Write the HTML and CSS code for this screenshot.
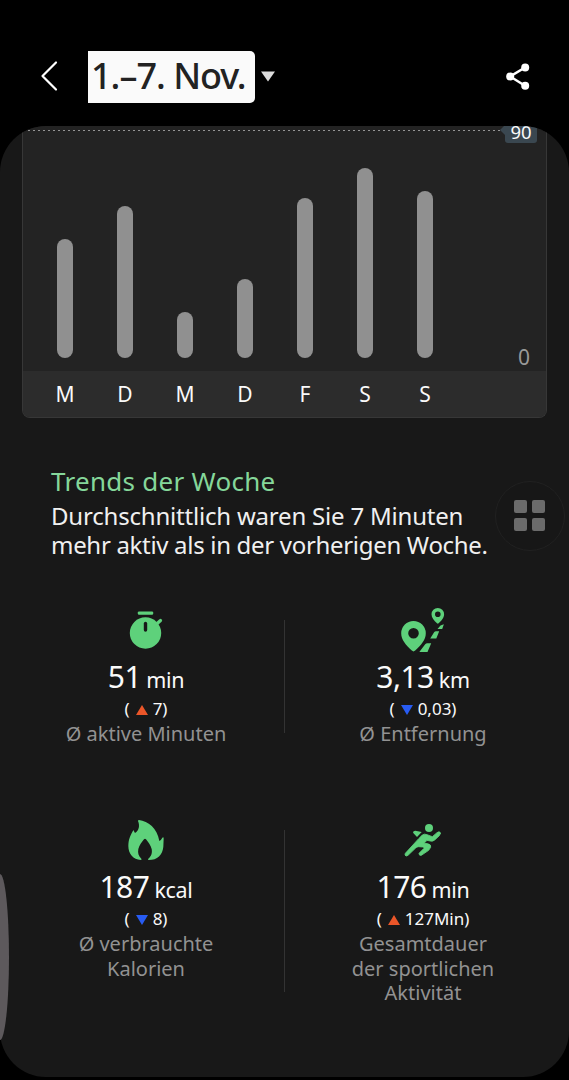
FILE: index.html
```html
<!DOCTYPE html>
<html lang="de">
<head>
<meta charset="utf-8">
<title>Trends der Woche</title>
<link rel="stylesheet" href="styles.css">
</head>
<body>
<div class="screen">
  <header class="header">
    <svg class="back" width="18" height="32" viewBox="0 0 18 32"><path d="M16 2.5 2.5 16 16 29.5" fill="none" stroke="#fff" stroke-width="2.2" stroke-linecap="round" stroke-linejoin="round"/></svg>
    <h1 class="period">1.–7. Nov.</h1>
    <svg class="caret" width="14" height="11" viewBox="0 0 14 11"><path d="M0 .5h14L7 10.5z" fill="#dcdcdc"/></svg>
    <svg class="share" width="24" height="28" viewBox="0 0 24 28"><path d="M19 5.500 4.200 14.500 19 23.800" fill="none" stroke="#fff" stroke-width="2.500"/><g fill="#fff"><circle cx="19.200" cy="5.500" r="4"/><circle cx="4.200" cy="14.500" r="4"/><circle cx="19.200" cy="23.800" r="4"/></g></svg>
  </header>
  <main class="panel">
    <section class="chart">
      <div class="plot">
        <i class="bar" style="height:119px"></i><i class="bar" style="height:152px"></i><i class="bar" style="height:46px"></i><i class="bar" style="height:79px"></i><i class="bar" style="height:160px"></i><i class="bar" style="height:190px"></i><i class="bar" style="height:167px"></i>
        <span class="zero">0</span>
        <div class="goal"></div>
        <span class="badge">90</span>
      </div>
      <div class="days"><span>M</span><span>D</span><span>M</span><span>D</span><span>F</span><span>S</span><span>S</span></div>
    </section>
    <section class="trend">
      <h2>Trends der Woche</h2>
      <p class="line-a">Durchschnittlich waren Sie 7 Minuten</p>
      <p class="line-b">mehr aktiv als in der vorherigen Woche.</p>
    </section>
    <section class="stats">
      <div class="stat">
        <svg class="icon" width="60" height="57" viewBox="0 0 60 57"><g fill="#5ed17b"><circle cx="29.500" cy="33" r="15.700"/><rect x="21.800" y="11.400" width="15.400" height="3.400" rx="1.200"/></g><path d="m40 24.500 4.500-4" stroke="#5ed17b" stroke-width="3.200" stroke-linecap="round"/><path d="M29.500 23.500v6.500" stroke="#181818" stroke-width="3.400" stroke-linecap="round"/></svg>
        <div class="value">51<small>min</small></div>
        <div class="delta">(<b class="up"></b>7)</div>
        <div class="label">Ø aktive Minuten</div>
      </div>
      <div class="rule"></div>
      <div class="stat">
        <svg class="icon" width="60" height="57" viewBox="0 0 60 57"><g fill="#5ed17b" fill-rule="evenodd"><path d="M20.500 21A12.300 12.300 0 0 0 8.200 33.300C8.200 40 13 45 18.800 50.600q1.700 1.600 3.400 0C28 45 32.800 40 32.800 33.300A12.300 12.300 0 0 0 20.500 21zm0 6.900a5.300 5.300 0 1 1 0 10.600 5.300 5.300 0 0 1 0-10.600z"/><path d="M44.800 8A6.300 6.300 0 0 0 38.500 14.300C38.500 18 41 20.500 44 23.300q.8.700 1.600 0C48.500 20.500 51.100 18 51.100 14.300A6.300 6.300 0 0 0 44.800 8zm0 3.500a2.800 2.800 0 1 1 0 5.600 2.800 2.800 0 0 1 0-5.600z"/><path d="M26.300 52 32.200 44.300q.8-1 2.200-1h3.800L34.500 52zM37.200 38.500l3.900-6.300q.7-1 1.900-1h3.200L43.300 38.500zM44.500 29l3-3.500 3.400-1.200-1.700 4.700z"/></g></svg>
        <div class="value">3,13<small>km</small></div>
        <div class="delta">(<b class="down"></b>0,03)</div>
        <div class="label">Ø Entfernung</div>
      </div>
      <div class="stat">
        <svg class="icon" width="60" height="57" viewBox="348 0 180 171"><path fill="#5ed17b" d="M417 30C444 34 472 54 478 93Q483 91 487 83Q491 79 491 86L490 110C488 134 472 150 446 150Q442 149 445 146C455 138 457 128 455 117C452 105 445 97 438 88Q435 85 432 88C425 97 418 105 415 117C413 128 415 138 424 146Q427 149 422 150C400 148 385 132 385 108C385 88 391 76 399 62Q402 59 402 64L405 69C417 61 420 48 414 33Q414 30 417 30Z"/></svg>
        <div class="value">187<small>kcal</small></div>
        <div class="delta">(<b class="down"></b>8)</div>
        <div class="label">Ø verbrauchte<br>Kalorien</div>
      </div>
      <div class="rule"></div>
      <div class="stat">
        <svg class="icon" width="60" height="57" viewBox="219 0 180 171"><g fill="#5ed17b"><circle cx="327" cy="54" r="12"/><path d="M279 68Q279 62 286 62L305 66 291 81Z"/><path stroke="#5ed17b" stroke-width="2.500" stroke-linejoin="round" d="M256 130 296 86 306 76Q313 70 321 74L337 80 351 68Q358 62 362 69L358 77 344 90Q338 95 331 93L321 91 312 100 323 101Q335 104 332 112L326 121 304 136Q297 138 297 130L312 115Q313 111 308 111L296 110Q290 110 286 115L264 136Q257 141 255 135Z"/></g></svg>
        <div class="value">176<small>min</small></div>
        <div class="delta">(<b class="up"></b>127Min)</div>
        <div class="label">Gesamtdauer<br>der sportlichen<br>Aktivität</div>
      </div>
    </section>
  </main>
  <div class="edge"></div>
  <div class="assist"><i></i><i></i><i></i><i></i></div>
</div>
</body>
</html>
```
FILE: styles.css
```css
* { box-sizing: border-box; }
body { margin: 0; background: #000; }
.screen {
  position: relative; width: 569px; height: 1080px; overflow: hidden;
  background: #000; color: #fafafa;
  font-family: "Noto Sans", "Open Sans", sans-serif;
}
h1, h2, p { margin: 0; font-weight: 400; }
svg { display: block; flex: none; }

.header { display: flex; align-items: center; height: 126px; padding: 26px 39px 0 40px; }
.period {
  width: 167px; height: 52px; margin: 2px 0 0 30px;
  padding-left: 3px; border-radius: 0 5px 5px 0; background: #fafafa; color: #222;
  font-size: 36px; font-weight: 500; line-height: 49px; letter-spacing: -1px; white-space: nowrap;
}
.caret { margin: 0 0 0 6px; }
.share { margin: -1px 0 0 auto; }

.panel { height: 951px; border-radius: 46px; overflow: hidden; background: #181818; }
.chart {
  width: 525px; height: 292px; margin-left: 22px; background: #232323;
  border: 1px solid #373737; border-top: 0; border-radius: 0 0 8px 8px; overflow: hidden;
}
.plot { position: relative; display: flex; align-items: flex-end; gap: 44px; height: 245px; padding: 0 0 13px 34px; }
.bar { flex: none; width: 16px; border-radius: 8px; background: #909090; }
.zero { width: 36px; margin: 0 0 -11px 29px; text-align: center; font-size: 21px; line-height: 24px; color: #999; }
.goal {
  position: absolute; left: 0; top: 4px; width: 477px; height: 1px;
  background: repeating-linear-gradient(90deg, #969696 0 2px, transparent 2px 5px);
}
.badge {
  position: absolute; left: 482px; top: -6px; width: 32px; height: 23px;
  border-radius: 3px; background: #3a4750; color: #fafafa;
  text-align: center; font-size: 18.500px; line-height: 23px;
}
.badge::before {
  content: ""; position: absolute; left: -5px; top: 5px;
  border: 5px solid transparent; border-left: 0; border-right-color: #3a4750;
}
.days { display: flex; height: 47px; padding-left: 12px; background: #2c2c2c; }
.days span { width: 60px; text-align: center; font-size: 21px; line-height: 47px; }

.trend { padding: 45px 0 0 51px; white-space: nowrap; }
.trend h2 { color: #85d79a; font-size: 26px; line-height: 36px; letter-spacing: 0.280px; margin-bottom: 2px; }
.trend p { font-size: 24px; line-height: 29px; color: #f0f0f0; }
.trend .line-a { letter-spacing: -0.200px; }
.trend .line-b { letter-spacing: -0.310px; }

.stats { display: grid; grid-template-columns: 276px 1px 276px; grid-template-rows: 210px 210px; margin: 41px 0 0 8px; }
.stat { display: flex; flex-direction: column; align-items: center; text-align: center; }
.rule { width: 1px; height: 113px; margin: 20px 0 0; background: #333; }
.rule:nth-of-type(5) { height: 162px; }
.value { display: flex; align-items: baseline; gap: 5px; padding-top: 2px; font-size: 30px; line-height: 36px; letter-spacing: -0.500px; }
.value small { font-size: 21.500px; letter-spacing: -0.300px; }
.delta { display: flex; align-items: center; margin-top: -1px; font-size: 17px; line-height: 24px; }
.delta b { border: 6px solid transparent; border-top: 0; margin: 1px 5px 0 6px; }
.delta .up { border-bottom: 10px solid #eb5629; }
.delta .down { border-bottom: 0; border-top: 10px solid #285cf3; }
.label { margin-top: 1px; font-size: 20px; line-height: 24.500px; color: #929292; }

.edge { position: absolute; left: -9px; top: 874px; width: 18px; height: 166px; border-radius: 50%; background: #5d595c; }
.assist {
  position: absolute; left: 495px; top: 481px; width: 70px; height: 70px; padding: 18px 18px;
  display: grid; grid-template-columns: 13px 13px; grid-template-rows: 13px 13px; gap: 5px;
  border: 1px solid #212121; border-radius: 50%; background: #171717;
}
.assist i { border-radius: 2px; background: #6b6b6b; }
```
